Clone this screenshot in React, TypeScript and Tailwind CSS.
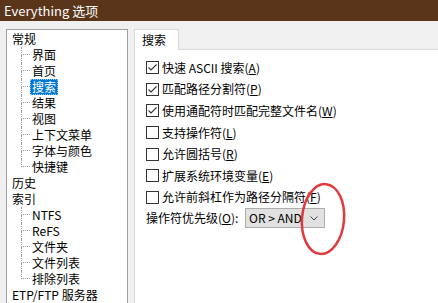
import React from "react";

type Node = { label: string; selected?: boolean; children?: { label: string; selected?: boolean }[] };

const tree: Node[] = [
  {
    label: "常规",
    children: [
      { label: "界面" },
      { label: "首页" },
      { label: "搜索", selected: true },
      { label: "结果" },
      { label: "视图" },
      { label: "上下文菜单" },
      { label: "字体与颜色" },
      { label: "快捷键" },
    ],
  },
  { label: "历史" },
  {
    label: "索引",
    children: [
      { label: "NTFS" },
      { label: "ReFS" },
      { label: "文件夹" },
      { label: "文件列表" },
      { label: "排除列表" },
    ],
  },
  { label: "ETP/FTP 服务器" },
];

function Connector({ last }: { last: boolean }) {
  return (
    <span className="ml-[14px] flex h-[16px] w-[9px] shrink-0 flex-col">
      <span className="h-[8px] border-b border-l border-dotted border-[#a0a0a0]" />
      <span className={last ? "h-[8px]" : "h-[8px] border-l border-dotted border-[#a0a0a0]"} />
    </span>
  );
}

function Check({ checked }: { checked: boolean }) {
  return (
    <span className="flex h-[13px] w-[13px] shrink-0 items-center justify-center border border-[#333333] bg-white">
      {checked && (
        <svg width="11" height="11" viewBox="0 0 11 11">
          <path d="M1.5 5.5 L4 8 L9.5 2.5" fill="none" stroke="#333333" strokeWidth="1.1" />
        </svg>
      )}
    </span>
  );
}

const options: { text: string; key: string; checked: boolean }[] = [
  { text: "快速 ASCII 搜索", key: "A", checked: true },
  { text: "匹配路径分割符", key: "P", checked: true },
  { text: "使用通配符时匹配完整文件名", key: "W", checked: true },
  { text: "支持操作符", key: "L", checked: false },
  { text: "允许圆括号", key: "R", checked: false },
  { text: "扩展系统环境变量", key: "E", checked: false },
  { text: "允许前斜杠作为路径分隔符", key: "F", checked: false },
];

export default function App() {
  return (
    <div className="relative h-[303px] w-[438px] overflow-hidden bg-[#f0f0f0] font-['Noto_Sans_CJK_SC','Noto_Sans',sans-serif] text-[12px] text-black">
      <div className="flex h-[21px] items-center bg-[#5b351a] pl-[4px] text-[13px] text-white">
        Everything 选项
      </div>

      <div className="flex gap-[6px] pl-[6px] pt-[8px]">
        {/* tree */}
        <div className="h-[300px] w-[122px] shrink-0 border border-[#a0a0a0] bg-white pt-[1px]">
          {tree.map((node) => (
            <div key={node.label}>
              <div className="flex h-[16px] items-center pl-[5px] leading-[16px]">{node.label}</div>
              {node.children?.map((c, i) => (
                <div key={c.label} className="flex h-[16px] items-center leading-[16px]">
                  <Connector last={i === node.children!.length - 1} />
                  <span
                    className={
                      c.selected
                        ? "flex h-[16px] items-center border border-dotted border-[#9cc8f0] bg-[#0078d7] px-[1px] text-white"
                        : "px-[2px]"
                    }
                  >
                    {c.label}
                  </span>
                </div>
              ))}
            </div>
          ))}
        </div>

        {/* tab panel */}
        <div className="flex w-[320px] shrink-0 flex-col">
          <div className="flex h-[21px]">
            <div className="flex w-[45px] items-center border-l border-r border-t border-[#d9d9d9] bg-white pl-[7px]">
              搜索
            </div>
            <div className="flex-1 border-b border-[#d9d9d9]" />
          </div>
          <div className="h-[260px] border-l border-[#d9d9d9] bg-white pl-[11px] pt-[7px]">
            {options.map((o) => (
              <div key={o.key} className="flex h-[21.6px] items-center gap-[3px]">
                <Check checked={o.checked} />
                <span>
                  {o.text}(<u>{o.key}</u>)
                </span>
              </div>
            ))}
            <div className="flex h-[20px] items-center">
              <span className="w-[99px]">
                操作符优先级(<u>O</u>):
              </span>
              <div className="flex h-[20px] w-[80px] items-center justify-between border border-[#adadad] bg-[#e1e1e1] pl-[3px] pr-[6px]">
                <span>OR &gt; AND</span>
                <svg width="8" height="5" viewBox="0 0 8 5">
                  <path d="M0.5 0.5 L4 4 L7.5 0.5" fill="none" stroke="#444444" strokeWidth="1" />
                </svg>
              </div>
            </div>
          </div>
        </div>
      </div>

      {/* red annotation ellipse */}
      <svg className="absolute left-[297px] top-[180px]" width="52" height="78" viewBox="0 0 52 78">
        <ellipse cx="26" cy="39" rx="21" ry="35" fill="none" stroke="#e03a3e" strokeWidth="2.5" transform="rotate(5 26 39)" />
      </svg>
    </div>
  );
}
